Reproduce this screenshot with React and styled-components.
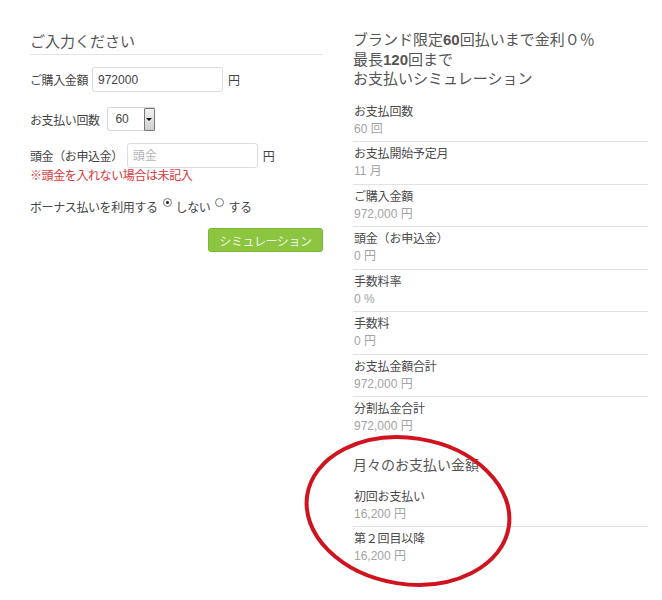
import React from "react";
import styled, { createGlobalStyle } from "styled-components";

const GlobalStyle = createGlobalStyle`
  body {
    margin: 0;
    background: #fff;
    font-family: "Liberation Sans", "Noto Sans CJK JP", sans-serif;
    color: #444;
  }
`;

const Page = styled.div`
  display: flex;
  gap: 30px;
  padding: 0 14px 0 30px;
  width: 662px;
  min-height: 600px;
  box-sizing: border-box;
`;

const LeftCol = styled.div`
  width: 293px;
  display: flex;
  flex-direction: column;
`;

const RightCol = styled.div`
  width: 295px;
  padding-top: 30px;
`;

const Title = styled.h2`
  margin: 32px 0 0;
  font-size: 15px;
  font-weight: normal;
  line-height: 20px;
  color: #555;
  padding-bottom: 2px;
  border-bottom: 1px solid #e3e3e3;
`;

const FormRow = styled.div`
  display: flex;
  align-items: center;
  gap: ${p => (p.tight ? 0 : 4)}px;
  margin-top: ${p => p.top}px;
  font-size: 12px;
  letter-spacing: -0.4px;
  color: #444;
`;

const TextInput = styled.input`
  width: 131px;
  height: 25px;
  box-sizing: border-box;
  border: 1px solid #dcdcdc;
  border-radius: 3px;
  padding: 0 5px;
  font-family: inherit;
  font-size: 12px;
  color: #444;
  outline: none;
  &::placeholder {
    color: #b5b5b5;
  }
`;

const Unit = styled.span`
  margin-left: 1px;
`;

const SelectBox = styled.div`
  display: flex;
  align-items: center;
  width: 48px;
  height: 24px;
  box-sizing: border-box;
  border: 1px solid #d6d6d6;
  border-right: none;
  border-radius: 3px 0 0 3px;
  margin-left: 3px;
`;

const SelectValue = styled.span`
  flex: 1;
  padding-left: 8px;
  font-size: 12px;
  color: #444;
`;

const SelectButton = styled.span`
  width: 11px;
  height: 23px;
  box-sizing: border-box;
  background: linear-gradient(#f2f2f2, #cfcfcf);
  border: 1px solid #777;
  border-radius: 1px;
  display: flex;
  align-items: center;
  justify-content: center;
  &::after {
    content: "";
    border-left: 3px solid transparent;
    border-right: 3px solid transparent;
    border-top: 3px solid #111;
  }
`;

const Note = styled.div`
  font-size: 12px;
  letter-spacing: -0.4px;
  line-height: 16px;
  color: #d9363a;
`;

const Radio = styled.span`
  display: inline-block;
  width: 7px;
  height: 7px;
  border: 1px solid #777;
  border-radius: 50%;
  background: #fff;
  position: relative;
  top: -4px;
  margin: 0 4px 0 5px;
  &::after {
    content: "";
    position: absolute;
    left: 2px;
    top: 2px;
    width: 3px;
    height: 3px;
    border-radius: 50%;
    background: ${p => (p.checked ? "#222" : "transparent")};
  }
`;

const ButtonRow = styled.div`
  display: flex;
  justify-content: flex-end;
  margin-top: 13px;
`;

const SimButton = styled.button`
  width: 115px;
  height: 24px;
  border: 1px solid #7db535;
  border-radius: 3px;
  background: #8cc540;
  color: #eef6e2;
  font-family: inherit;
  font-size: 12px;
  letter-spacing: -0.4px;
  padding: 0;
`;

const Heading = styled.h3`
  margin: 0;
  font-size: 15px;
  font-weight: normal;
  line-height: 19.5px;
  color: #555;
  b {
    font-weight: bold;
  }
`;

const List = styled.div`
  margin-top: ${p => p.top}px;
`;

const Row = styled.div`
  padding: 4px 0 3.5px 1px;
  border-bottom: 1px solid #e2e2e2;
  &:last-child {
    border-bottom-color: transparent;
  }
`;

const Label = styled.div`
  font-size: 12px;
  letter-spacing: -0.2px;
  line-height: 17px;
  color: #4a4a4a;
`;

const Value = styled.div`
  font-size: 12px;
  line-height: 17px;
  color: #a3a3a3;
`;

const MonthlyGroup = styled.div`
  position: relative;
  margin-top: 16px;
`;

const SubHeading = styled.h4`
  margin: 0;
  font-size: 14px;
  font-weight: normal;
  line-height: 19px;
  color: #555;
`;

const Circle = styled.svg`
  position: absolute;
  left: -55px;
  top: -25px;
  pointer-events: none;
  overflow: visible;
`;

const summary = [
  ["お支払回数", "60 回"],
  ["お支払開始予定月", "11 月"],
  ["ご購入金額", "972,000 円"],
  ["頭金（お申込金）", "0 円"],
  ["手数料率", "0 %"],
  ["手数料", "0 円"],
  ["お支払金額合計", "972,000 円"],
  ["分割払金合計", "972,000 円"],
];

const monthly = [
  ["初回お支払い", "16,200 円"],
  ["第２回目以降", "16,200 円"],
];

export default function App() {
  return (
    <Page>
      <GlobalStyle />
      <LeftCol>
        <Title>ご入力ください</Title>
        <FormRow top={12}>
          <span>ご購入金額</span>
          <TextInput defaultValue="972000" />
          <Unit>円</Unit>
        </FormRow>
        <FormRow top={15}>
          <span>お支払い回数</span>
          <SelectBox>
            <SelectValue>60</SelectValue>
            <SelectButton />
          </SelectBox>
        </FormRow>
        <FormRow top={12}>
          <span>頭金（お申込金）</span>
          <TextInput placeholder="頭金" />
          <Unit>円</Unit>
        </FormRow>
        <Note>※頭金を入れない場合は未記入</Note>
        <FormRow top={14} tight>
          <span>ボーナス払いを利用する</span>
          <Radio checked />
          <span>しない</span>
          <Radio />
          <span>する</span>
        </FormRow>
        <ButtonRow>
          <SimButton>シミュレーション</SimButton>
        </ButtonRow>
      </LeftCol>
      <RightCol>
        <Heading>
          ブランド限定<b>60</b>回払いまで金利０％
          <br />
          最長<b>120</b>回まで
          <br />
          お支払いシミュレーション
        </Heading>
        <List top={11}>
          {summary.map(([l, v]) => (
            <Row key={l}>
              <Label>{l}</Label>
              <Value>{v}</Value>
            </Row>
          ))}
        </List>
        <MonthlyGroup>
          <SubHeading>月々のお支払い金額</SubHeading>
          <List top={10}>
            {monthly.map(([l, v]) => (
              <Row key={l}>
                <Label>{l}</Label>
                <Value>{v}</Value>
              </Row>
            ))}
          </List>
          <Circle width="220" height="160" viewBox="0 0 220 160">
            <ellipse
              cx="110"
              cy="80"
              rx="102"
              ry="73"
              transform="rotate(9 110 80)"
              fill="none"
              stroke="#cf1420"
              strokeWidth="4"
            />
          </Circle>
        </MonthlyGroup>
      </RightCol>
    </Page>
  );
}
